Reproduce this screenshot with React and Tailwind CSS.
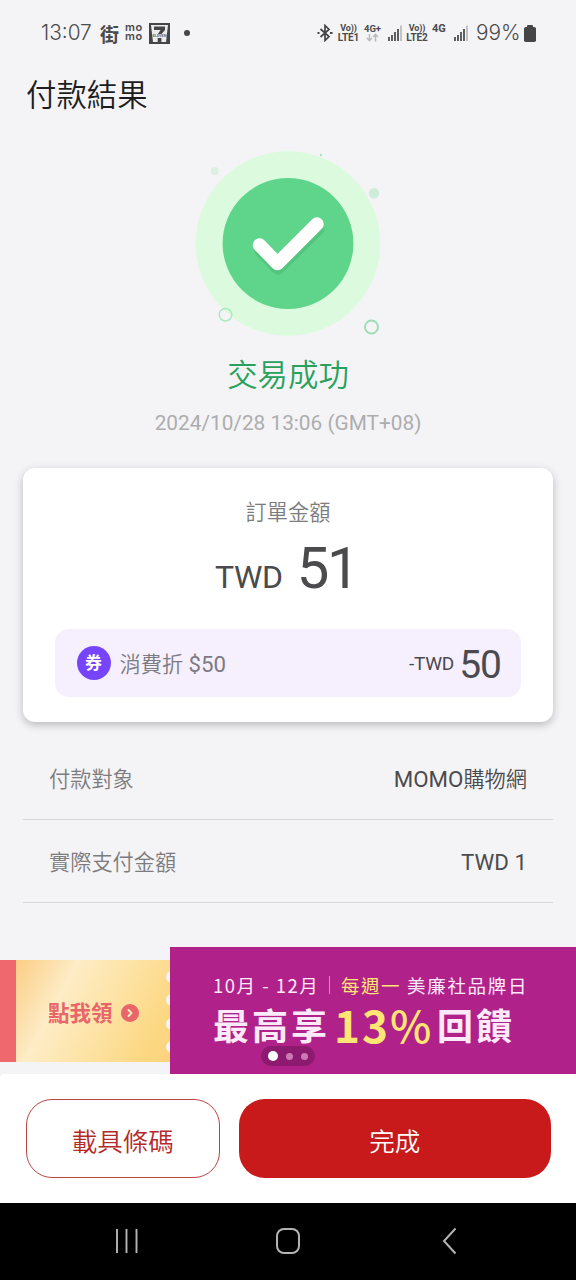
import React from 'react';
import { ChevronRight } from 'lucide-react';

const details = [
  { label: '付款對象', latin: 'MOMO', rest: '購物網' },
  { label: '實際支付金額', latin: 'TWD 1' },
];

const SignalBars = ({ className }) => (
  <svg viewBox="0 0 15 16" className={`h-4 w-[15px] shrink-0 ${className}`}>
    <path d="M1 12v4M4 10v6M7 7v9M10 4v12" stroke="#454547" strokeWidth="1.7" />
    <path d="M13 0.5v15.5" stroke="#b9b9bb" strokeWidth="1.7" />
  </svg>
);

const VoLte = ({ sim, className }) => (
  <div className={`flex w-[22px] shrink-0 flex-col items-center text-[10px] leading-[9px] font-bold ${className}`}>
    <span className="text-[9px] tracking-[-0.1px]">Vo))</span>
    <span className="tracking-[-0.1px]">LTE{sim}</span>
  </div>
);

const StatusBar = () => (
  <header className="flex h-[66px] items-center pl-[41px] text-[#4b4b4d]">
    <span className="w-[59px] shrink-0 font-['Inter',sans-serif] text-[20.8px] leading-none font-[350]">13:07</span>
    <span className="w-[19px] shrink-0 font-['Noto_Sans_CJK_TC',sans-serif] text-[19px] leading-none font-bold">街</span>
    <div className="ml-[6px] flex w-5 shrink-0 flex-col pb-[2px] font-['Inter',sans-serif] text-[11px] leading-[9px] font-semibold tracking-[0.6px]">
      <span>mo</span>
      <span>mo</span>
    </div>
    <svg viewBox="0 0 21 21" className="ml-1 h-[21px] w-[21px] shrink-0">
      <rect width="21" height="21" fill="#454547" />
      <path d="M2 2h17l-2 17H4z" fill="#ececee" />
      <path d="M5 3.5h11v3.5l-3.5 4H9l2.5-4H5z" fill="#454547" />
      <path d="M8.7 15h3.7v4H8.7z" fill="#454547" />
      <text x="10.5" y="14.4" textAnchor="middle" fontSize="3.8" fontWeight="700" fill="#6b6b6d">ELEVEN</text>
    </svg>
    <span className="ml-[13.5px] h-[6px] w-[6px] shrink-0 rounded-full bg-[#454547]" />
    <svg viewBox="0 0 16 18" className="ml-[127px] h-[18px] w-4 shrink-0" fill="none" stroke="#454547" strokeWidth="1.7">
      <path d="M3.5 5l8.5 7.6L8 16.5V1.5L12 5.4L3.5 13" />
      <path d="M0.5 9h2M13 9h2.5" strokeWidth="2" />
    </svg>
    <VoLte sim="1" className="ml-[5px]" />
    <div className="ml-[4px] flex w-[18px] shrink-0 flex-col items-center text-[9.5px] leading-[9px] font-bold">
      <span>4G+</span>
      <svg viewBox="0 0 13 9" className="h-[9px] w-[13px]" fill="none" stroke="#b9b9bb" strokeWidth="1.5">
        <path d="M3.5 1v6.5M1 5l2.5 2.7L6 5M9.5 8.5V1.5M7 4l2.5-2.7L12 4" />
      </svg>
    </div>
    <SignalBars className="ml-[6px]" />
    <VoLte sim="2" className="ml-[3.5px]" />
    <span className="mb-[9px] ml-[4px] w-[15px] shrink-0 text-[11px] leading-[9px] font-bold">4G</span>
    <SignalBars className="ml-[6.5px]" />
    <span className="ml-[7.5px] w-[47px] shrink-0 font-['Inter',sans-serif] text-[20.8px] leading-none font-[350]">99%</span>
    <svg viewBox="0 0 12 17" className="ml-[1px] h-[17px] w-3 shrink-0" fill="#454547">
      <rect x="3" width="6" height="4" rx="1" />
      <rect y="2" width="12" height="15" rx="1.8" />
    </svg>
  </header>
);

const SuccessMark = () => (
  <svg viewBox="180 140 216 210" className="mx-auto h-[210px] w-[216px]" fill="none">
    <circle cx="214.8" cy="171" r="4" fill="#dcefe3" />
    <circle cx="374" cy="193.3" r="5.2" fill="#cdecd9" />
    <circle cx="288" cy="243.5" r="92.3" fill="#dcfadd" />
    <circle cx="321" cy="155" r="1.2" fill="#a9e3c0" />
    <circle cx="288" cy="243.5" r="65.4" fill="#5fd58b" />
    <g strokeWidth="13.5" strokeLinecap="round" strokeLinejoin="round">
      <path d="M260.5 249.5l17.5 18.5l39.5-39" stroke="#55c57e" />
      <path d="M259.5 245l18 18.5l39.5-39.5" stroke="#fff" />
    </g>
    <circle cx="225.5" cy="314.7" r="6.3" stroke="#a9e9bd" strokeWidth="1.5" />
    <circle cx="371.5" cy="327" r="6.5" stroke="#9fddb5" strokeWidth="2" />
  </svg>
);

const OrderCard = () => (
  <section className="mx-[23px] mt-[25px] h-[254px] rounded-xl bg-white px-8 pt-[29px] shadow-[0_3px_8px_rgba(0,0,0,0.24)]">
    <p className="text-center text-[21.2px] leading-8 font-[350] text-[#7c7c7e]">訂單金額</p>
    <div className="mt-[4px] flex h-[70px] items-baseline justify-center pr-1 text-[#4b4b4d]">
      <span className="text-[32px] leading-[70px] tracking-[-0.3px]">TWD</span>
      <span className="ml-[14px] text-[58px] leading-[70px] tracking-[-2.5px]">51</span>
    </div>
    <div className="mt-[26px] flex h-[68px] items-center rounded-[14px] bg-[#f6f0fe] pr-5 pl-[21.5px]">
      <span className="flex h-[34px] w-[34px] items-center justify-center rounded-full bg-[#7644fb] text-[17px] leading-none font-bold text-white">
        券
      </span>
      <span className="ml-[9px] pt-[3px] text-[22.2px] leading-8 text-[#7c7a82]">
        <span className="text-[21.2px] font-[350]">消費折</span> $50
      </span>
      <div className="ml-auto flex items-center text-[#4b4a50]">
        <span className="pt-[1px] text-[19px] leading-none tracking-[-0.2px]">-TWD</span>
        <span className="ml-[5px] pt-[4px] text-[39px] leading-none tracking-[-1px]">50</span>
      </div>
    </div>
  </section>
);

const DetailRow = ({ label, latin, rest }) => (
  <div className="flex h-[83px] items-center justify-between border-b border-[#d8d8da] px-[26px] pt-[3px] text-[21.2px]">
    <span className="font-[350] text-[#7c7c7e]">{label}</span>
    <span className="text-[#4b4b4d]">
      <span className="text-[22.3px]">{latin}</span>
      <span className="font-[350]">{rest}</span>
    </span>
  </div>
);

const Coupon = () => (
  <div className="mt-[12.5px] flex h-[102px] w-[170px] shrink-0">
    <div className="w-4 bg-[#ee686d]" />
    <div className="relative flex flex-1 items-center bg-[linear-gradient(118deg,#fbcd84_0%,#fdecc6_30%,#fde6b0_48%,#fcd883_85%,#fbd27b_100%)] pl-[32px] text-[#e8666a]">
      <span className="pt-[7px] text-[21.5px] font-bold">點我領</span>
      <span className="mt-1 ml-[8px] flex h-[18px] w-[18px] items-center justify-center rounded-full bg-[#e8666a]">
        <ChevronRight className="h-3 w-3 text-[#fde9c0]" strokeWidth={4} />
      </span>
      {/* ticket perforation */}
      <div className="absolute top-[11px] right-0 flex w-1 flex-col gap-[11.5px] overflow-hidden">
        {[0, 1, 2, 3].map((i) => (
          <span key={i} className="h-3 w-3 rounded-full bg-[#f4f4f6]" />
        ))}
      </div>
    </div>
  </div>
);

const Promo = () => (
  <div className="relative h-[127px] flex-1 bg-[#b02189] pt-[26px] pl-[43px] font-['Noto_Sans_CJK_TC',sans-serif] whitespace-nowrap text-[#fdeafb]">
    <div className="flex h-[24px] items-center text-[18.5px] leading-none tracking-[1.5px]">
      <span className="w-[116px]">10月 - 12月</span>
      <span className="h-[18px] w-px bg-[#d888c5]" />
      <span className="ml-[11px] w-[66px] text-[#fee574]">每週一</span>
      <span className="tracking-[1.7px]">美廉社品牌日</span>
    </div>
    <div className="flex h-[54px] items-center leading-none font-bold">
      <span className="w-[121px] text-[36px] tracking-[3px]">最高享</span>
      <span className="w-[103px] text-[44px] tracking-[2px] text-[#fee574]">
        13<span className="font-medium">%</span>
      </span>
      <span className="text-[36px] tracking-[3px]">回饋</span>
    </div>
    <div className="absolute top-[99px] left-[91px] flex h-5 w-[54px] items-center justify-center gap-2 rounded-full bg-[#8c1b6f]">
      <span className="h-[10px] w-[10px] rounded-full bg-white" />
      <span className="h-[7px] w-[7px] rounded-full bg-[#cc7ab7]" />
      <span className="h-[7px] w-[7px] rounded-full bg-[#cc7ab7]" />
    </div>
  </div>
);

const NavBar = () => (
  <nav className="flex h-[77px] items-center bg-black pb-[2px] text-[#b4b4b4]">
    <svg viewBox="0 0 24 26" className="ml-[115px] h-[26px] w-6" stroke="currentColor" strokeWidth="1.9">
      <path d="M2 1v24M11.5 1v24M21.5 1v24" />
    </svg>
    <span className="ml-[137px] h-[26px] w-6 rounded-lg border-2 border-current" />
    <svg viewBox="0 0 14 28" className="ml-[142px] h-7 w-[14px]" fill="none" stroke="currentColor" strokeWidth="2">
      <path d="M13.5 1.5L2 14l11.5 12.5" />
    </svg>
  </nav>
);

export default function App() {
  return (
    <div className="flex h-[1280px] w-[576px] flex-col overflow-hidden bg-[#f4f4f6] font-['Roboto','Noto_Sans_CJK_TC',sans-serif]">
      <StatusBar />
      <h1 className="h-[74px] pl-[26px] text-[30.4px] leading-[60px] font-[350] text-[#1d1d1f]">付款結果</h1>
      <SuccessMark />
      <p className="pt-[1px] text-center text-[30.4px] leading-[50px] font-[350] text-[#27a15b]">交易成功</p>
      <p className="mt-[2px] text-center text-[20.8px] leading-[40px] text-[#adadaf]">2024/10/28 13:06 (GMT+08)</p>
      <OrderCard />
      <section className="mx-[23px] mt-[15px]">
        {details.map((d) => (
          <DetailRow key={d.label} {...d} />
        ))}
      </section>
      <section className="mt-auto flex h-[127px] shrink-0">
        <Coupon />
        <Promo />
      </section>
      <footer className="flex h-[129px] shrink-0 gap-[19px] rounded-t bg-white px-[25.5px] pt-[25px] text-[25.5px]">
        <button className="h-[78.5px] w-[194.5px] rounded-[26px] border-[1.5px] border-[#b94543] pt-[7px] font-[350] text-[#b42a2b]">載具條碼</button>
        <button className="h-[78.5px] flex-1 rounded-[26px] bg-[#c8191b] pt-[7px] font-[350] text-white">完成</button>
      </footer>
      <NavBar />
    </div>
  );
}
